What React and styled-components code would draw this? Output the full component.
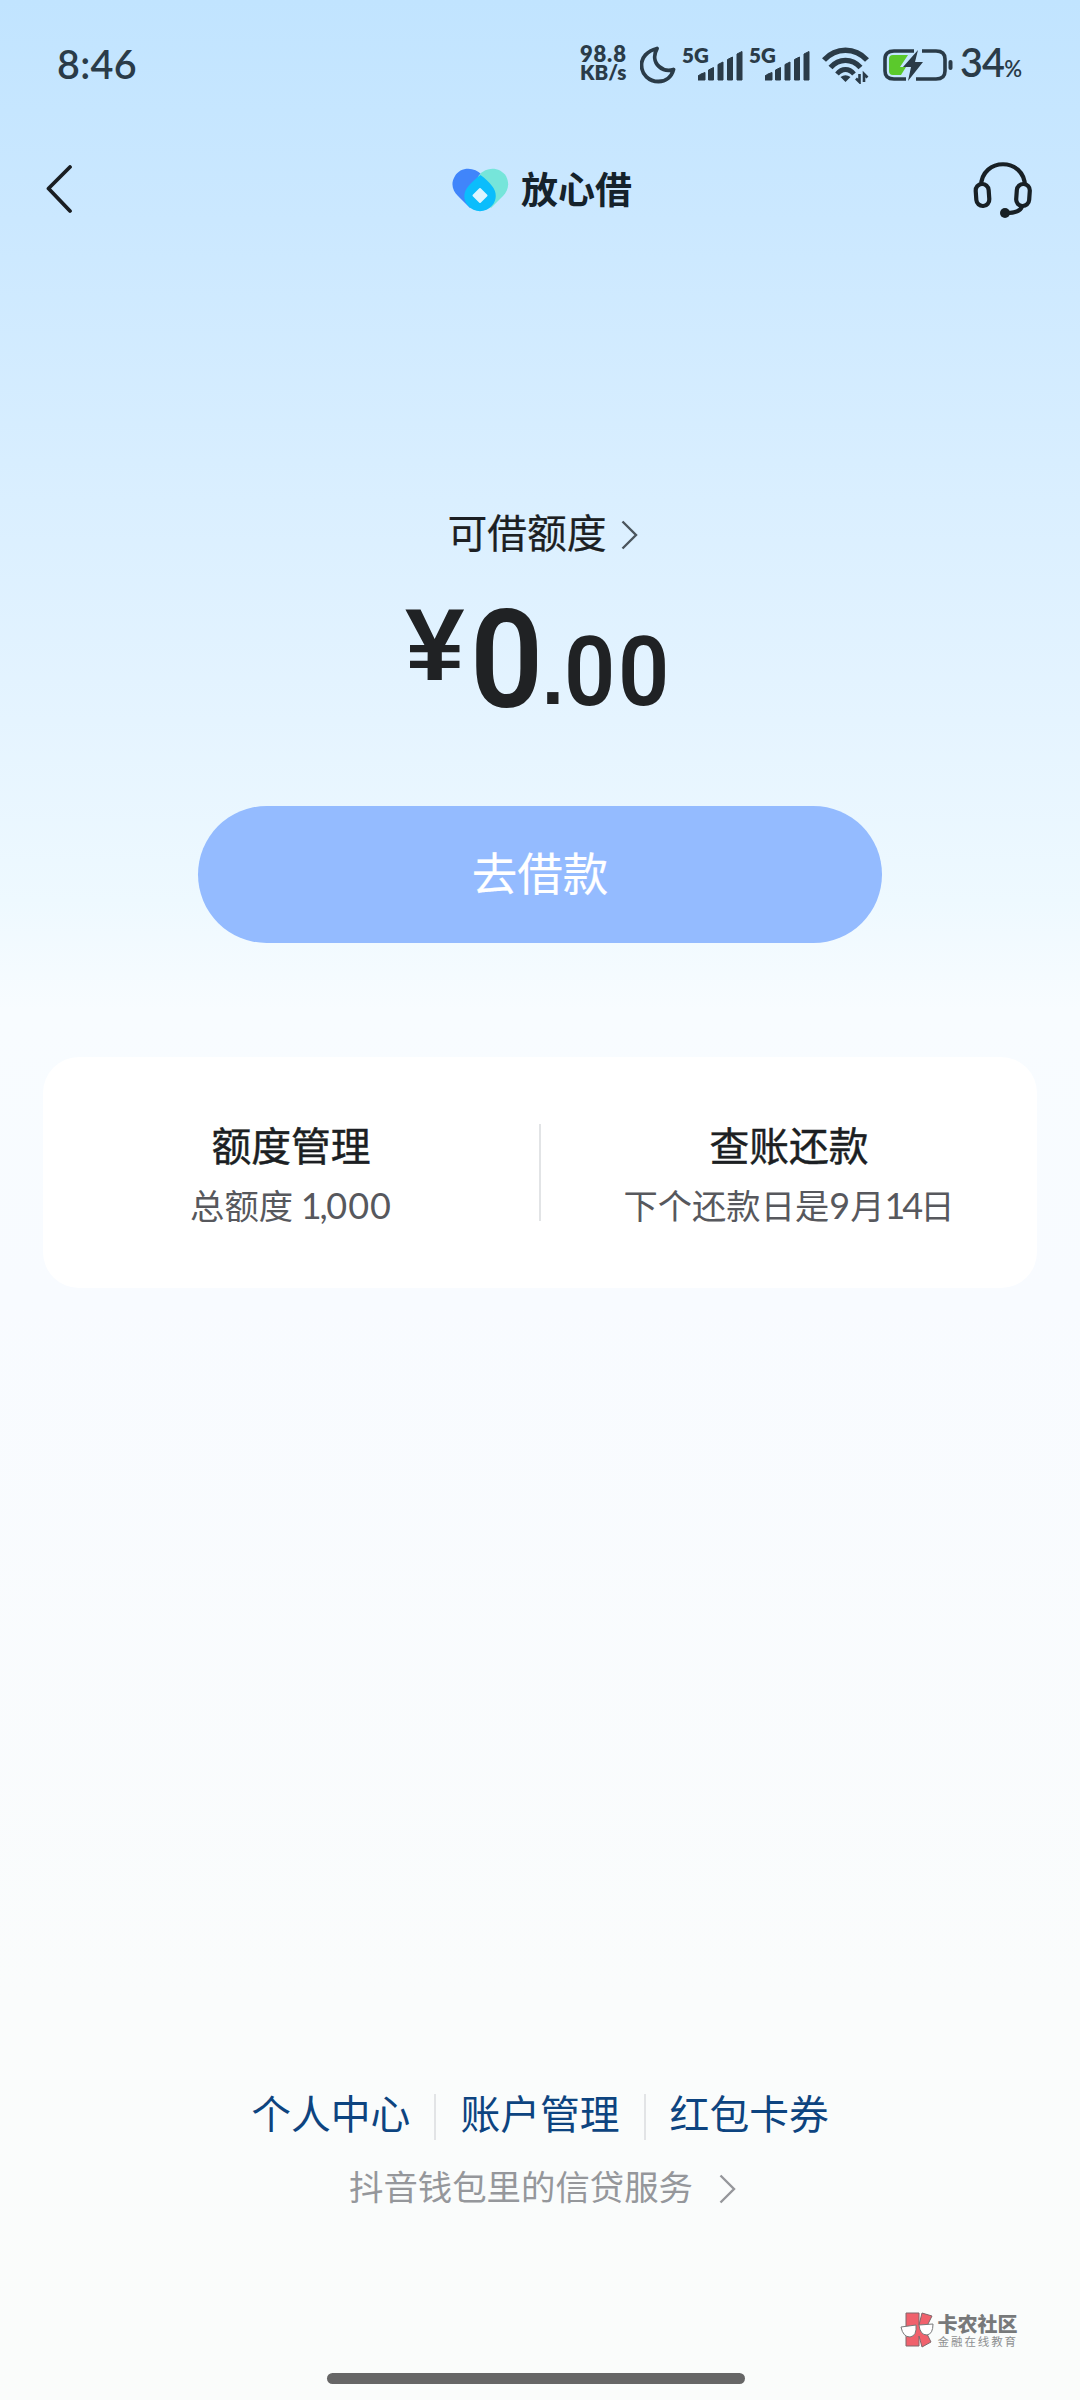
import React from "react";
import styled, { createGlobalStyle } from "styled-components";

const GlobalStyle = createGlobalStyle`
  * {
    box-sizing: border-box;
  }

  body {
    margin: 0;
    font-family: "Noto Sans CJK SC", sans-serif;
    color: #1c1f23;
  }
`;

const Page = styled.div`
  width: 1080px;
  height: 2400px;
  display: flex;
  flex-direction: column;
  overflow: hidden;
  background: linear-gradient(
    180deg,
    #c1e4ff 0px,
    #cbe8ff 220px,
    #daefff 500px,
    #e5f4ff 720px,
    #eef9ff 900px,
    #f8fcff 1010px,
    #f8fbff 1300px,
    #fafcfc 2000px,
    #fafcfb 2400px
  );
`;

// Status bar
const StatusBar = styled.header`
  height: 130px;
  padding: 0 57px;
  display: flex;
  justify-content: space-between;
  align-items: center;
  font-family: Lato, sans-serif;
  color: #2a3b48;

  svg {
    display: block;
    flex: none;
  }
`;

const Time = styled.div`
  margin-top: -2px;
  font-size: 39.5px;
  line-height: 48px;
  font-weight: 600;
  letter-spacing: 0.3px;
`;

const StatusIcons = styled.div`
  display: flex;
  align-items: center;
`;

const NetSpeed = styled.div`
  width: 60px;
  display: flex;
  flex-direction: column;
  margin-top: -4px;
  font-size: 20.5px;
  line-height: 19px;
  font-weight: 800;
  white-space: nowrap;
`;

const NetValue = styled.span`
  font-size: 22px;
  letter-spacing: 0.8px;
`;

const SignalBox = styled.div`
  width: 67px;
  height: 36px;
  display: flex;
  align-items: flex-start;

  span {
    width: 16px;
    margin-top: -1px;
    font-size: 20.5px;
    line-height: 18px;
    font-weight: 800;
  }
`;

const WifiBox = styled.div`
  margin: 0 13px 0 6px;
`;

const BatteryText = styled.div`
  width: 63px;
  margin-left: 7px;
  font-size: 39.5px;
  line-height: 48px;
  font-weight: 600;
  letter-spacing: -0.8px;
  white-space: nowrap;

  small {
    font-size: 22px;
  }
`;

// Navigation bar
const NavBar = styled.nav`
  height: 120px;
  padding: 0 47px 0 45px;
  display: flex;
  justify-content: space-between;
  align-items: center;
`;

const Brand = styled.div`
  margin-left: 38px;
  display: flex;
  align-items: center;
  gap: 12px;
  font-size: 37px;
  line-height: 44px;
  font-weight: 700;
  color: #15222b;

  span {
    margin-top: -4px;
  }
`;

// Credit limit
const Limit = styled.section`
  display: flex;
  flex-direction: column;
  align-items: center;
  padding-top: 251px;
`;

const LimitLabel = styled.div`
  height: 60px;
  margin-left: 5px;
  display: flex;
  align-items: center;
  gap: 14px;
  font-size: 39.8px;
  line-height: 60px;
  -webkit-text-stroke: 0.2px currentColor;

  svg {
    margin-top: 7px;
  }
`;

const Amount = styled.div`
  height: 148px;
  margin-top: 46px;
  width: 270px;
  display: flex;
  align-items: flex-start;
  font-family: Roboto, sans-serif;
  font-weight: 600;
  color: #202224;
`;

const Currency = styled.span`
  width: 68px;
  font-family: "Liberation Sans", sans-serif;
  font-size: 102px;
  line-height: 76px;
  font-weight: 700;
  transform: scaleX(1.05);
  transform-origin: left;
`;

const Whole = styled.span`
  width: 72px;
  margin-left: 8px;
  font-size: 138px;
  line-height: 107px;
  transform: scaleX(0.93);
  transform-origin: left;
`;

const Point = styled.span`
  width: 34px;
  font-family: "Liberation Sans", sans-serif;
  font-size: 80px;
  line-height: 139px;
  font-weight: 700;
`;

const Fraction = styled.span`
  font-size: 95.5px;
  line-height: 130px;
  transform: scaleX(0.94);
  transform-origin: left;
  letter-spacing: 3px;
`;

const BorrowButton = styled.button`
  width: 684px;
  height: 137px;
  margin-top: 51px;
  padding: 0 0 7px;
  border: 0;
  border-radius: 69px;
  background: #94bbff;
  color: #fff;
  font-family: inherit;
  font-size: 45.5px;
  line-height: 60px;
  -webkit-text-stroke: 0.2px currentColor;
`;

// Two entries under the button
const Card = styled.section`
  width: 994px;
  height: 231px;
  margin: 114px auto 0;
  display: flex;
  align-items: center;
  border-radius: 36px;
  background: #fff;
`;

const CardItem = styled.div`
  flex: 1;
  text-align: center;
`;

const CardTitle = styled.div`
  font-size: 39.8px;
  line-height: 58px;
  -webkit-text-stroke: 0.45px currentColor;
`;

const CardText = styled.div`
  margin-top: 5px;
  font-size: 34.3px;
  line-height: 52px;
  color: #57585d;
`;

const Digits = styled.span`
  font-family: Lato, sans-serif;
  font-size: 36px;
  letter-spacing: ${(props) => props.$spacing || 0}px;
`;

const Divider = styled.div`
  width: 2px;
  height: ${(props) => props.$height}px;
  background: #e2e4e6;
`;

// Footer
const Footer = styled.footer`
  margin-top: auto;
  display: flex;
  flex-direction: column;
  align-items: center;
`;

const Links = styled.div`
  height: 46px;
  display: flex;
  align-items: center;
  gap: 24px;
  font-size: 39.8px;
  line-height: 46px;
  color: #0d4480;

  span {
    margin-top: -11px;
  }
`;

const Service = styled.div`
  height: 50px;
  margin: 20px 0 0 5px;
  display: flex;
  align-items: center;
  gap: 26px;
  font-size: 34.4px;
  line-height: 50px;
  color: #95979b;

  svg {
    margin-top: 7px;
  }
`;

const Watermark = styled.div`
  align-self: flex-end;
  height: 38px;
  margin: 101px 62px 0 0;
  display: flex;
  align-items: center;
  gap: 4px;
`;

const WatermarkName = styled.div`
  font-size: 20px;
  line-height: 20px;
  font-weight: 900;
  color: #77797a;
`;

const WatermarkSlogan = styled.div`
  margin-top: 1px;
  font-size: 11.5px;
  line-height: 12px;
  letter-spacing: 1.9px;
  color: #8e9091;
`;

const HomeIndicator = styled.div`
  width: 418px;
  height: 11px;
  margin: 24px 0 16px -8px;
  border-radius: 6px;
  background: #666;
`;

const Chevron = ({ color }) => (
  <svg width="17" height="30" viewBox="0 0 17 30" fill="none">
    <path d="M1.5 1.5L15 15L1.5 28.5" stroke={color} strokeWidth="2.4" />
  </svg>
);

const Signal = () => (
  <SignalBox>
    <span>5G</span>
    <svg width="45" height="34" viewBox="0 0 45 34" fill="#2a3b48">
      <path d="M0 33V29L3 27L7 25.5V33Z" stroke="#2a3b48" strokeLinejoin="round" />
      <path d="M10.5 23L15.5 20.5V33H10.5Z" stroke="#2a3b48" strokeLinejoin="round" />
      <path d="M20 17.5L25 15V33H20Z" stroke="#2a3b48" strokeLinejoin="round" />
      <path d="M29.5 12.5L34.5 10V33H29.5Z" stroke="#2a3b48" strokeLinejoin="round" />
      <path d="M39 7L44 4.5V33H39Z" stroke="#2a3b48" strokeLinejoin="round" />
    </svg>
  </SignalBox>
);

const Moon = () => (
  <svg width="42" height="38" viewBox="0 0 42 38" fill="none">
    <path
      d="M17 2.5C7 5 1.5 11.5 1.5 19C1.5 28.5 9 35.5 18.5 35.5C26 35.5 31.5 31 33.5 23.5C29 25 23.5 24.5 19 20.5C14 16 13.5 9 17 2.5Z"
      stroke="#2a3b48"
      strokeWidth="3.8"
      strokeLinejoin="round"
    />
  </svg>
);

const Wifi = () => (
  <WifiBox>
    <svg width="48" height="37" viewBox="0 0 48 37" fill="none" stroke="#2a3b48">
      <path d="M2 13C14 0 33 0 45 13" strokeWidth="5.4" />
      <path d="M8.5 20.5C17 11 30 11 38.5 20.5" strokeWidth="5.4" />
      <path d="M15 27C20 21 27 21 32 27" strokeWidth="4.8" />
      <path d="M18.5 30Q23.5 26.5 28.5 30L23.5 35Z" fill="#2a3b48" stroke="none" />
      <path d="M37.5 27V35L34 31.5M42 35V27L45.5 30.5" strokeWidth="2.6" />
    </svg>
  </WifiBox>
);

const Battery = () => (
  <svg width="70" height="34" viewBox="0 0 70 34" fill="none">
    <path d="M31 3H11Q2 3 2 11V23Q2 31 11 31H23" stroke="#2a3b48" strokeWidth="3.6" />
    <path d="M39 3H53Q62 3 62 11V23Q62 31 53 31H33" stroke="#2a3b48" strokeWidth="3.6" />
    <path d="M10 7H25L17 19H23L18 27H10Q6 27 6 23V11Q6 7 10 7Z" fill="#5bc92c" />
    <path d="M35 2L20 19H28L25 33L40 14H32Z" fill="#2a3b48" />
    <rect x="65.5" y="12" width="4" height="10" rx="2" fill="#2a3b48" />
  </svg>
);

const BackIcon = () => (
  <svg width="28" height="50" viewBox="0 0 28 50" fill="none">
    <path
      d="M25 2L3.5 23.5L25 46"
      stroke="#1a1e22"
      strokeWidth="3.8"
      strokeLinecap="round"
      strokeLinejoin="round"
    />
  </svg>
);

const HeartLogo = () => (
  <svg width="57" height="44" viewBox="0 0 57 44">
    <path d="M30 7C22 -2 8 -1 3 8C-2 16 1 23 6 28L18 40L38 22Z" fill="#4085fb" />
    <path d="M27 7C35 -2 48 -1 54 8C58 16 56 23 51 28L39 40L20 22Z" fill="#76e5da" />
    <path
      d="M28.5 7C33 10 37 14 40 18C45 24 45 32 40 37.5C34 45 22 45 16 37.5C11 32 11 24 16.5 18C20 14 24 10 28.5 7Z"
      fill="#0bbdfc"
    />
    <path
      d="M28 21L34.5 27.5L28 34L21.5 27.5Z"
      fill="#dcf5ff"
      stroke="#dcf5ff"
      strokeWidth="2"
      strokeLinejoin="round"
    />
  </svg>
);

const HeadsetIcon = () => (
  <svg width="60" height="58" viewBox="0 0 60 58" fill="none" stroke="#182025" strokeWidth="4.2">
    <path d="M8 25C9 -4 51 -4 52 25" />
    <rect x="3" y="23" width="13" height="22" rx="6.5" transform="rotate(-4 9.5 34)" />
    <rect x="43.5" y="23" width="13" height="22" rx="6.5" transform="rotate(4 50 34)" />
    <path d="M49 45C48 50 42 52 33 52" />
    <circle cx="32" cy="52" r="5" fill="#182025" stroke="none" />
  </svg>
);

const WatermarkLogo = () => (
  <svg width="34" height="36" viewBox="0 0 34 36">
    <path
      d="M6 1H19V13L22 1L32 4L25 18L31 30L22 35L19 24V34H6Z"
      fill="#f0616c"
      stroke="#80686c"
    />
    <path d="M1 15L16 13Q17 24 10 25Q3 25 1 15Z" fill="#fff" stroke="#77797a" />
    <path d="M19 13L33 12Q33 22 27 23Q20 23 19 13Z" fill="#fff" stroke="#77797a" />
  </svg>
);

const links = ["个人中心", "账户管理", "红包卡券"];

const App = () => {
  return (
    <>
      <GlobalStyle />
      <Page>
        <StatusBar>
          <Time>8:46</Time>
          <StatusIcons>
            <NetSpeed>
              <NetValue>98.8</NetValue>
              <span>KB/s</span>
            </NetSpeed>
            <Moon />
            <Signal />
            <Signal />
            <Wifi />
            <Battery />
            <BatteryText>
              34<small>%</small>
            </BatteryText>
          </StatusIcons>
        </StatusBar>

        <NavBar>
          <BackIcon />
          <Brand>
            <HeartLogo />
            <span>放心借</span>
          </Brand>
          <HeadsetIcon />
        </NavBar>

        <Limit>
          <LimitLabel>
            可借额度
            <Chevron color="#4b555d" />
          </LimitLabel>
          <Amount>
            <Currency>¥</Currency>
            <Whole>0</Whole>
            <Point>.</Point>
            <Fraction>00</Fraction>
          </Amount>
          <BorrowButton>去借款</BorrowButton>
        </Limit>

        <Card>
          <CardItem>
            <CardTitle>额度管理</CardTitle>
            <CardText>
              总额度 <Digits $spacing={-2}>1</Digits>
              <Digits $spacing={-1.5}>,</Digits>
              <Digits $spacing={1}>000</Digits>
            </CardText>
          </CardItem>
          <Divider $height={97} />
          <CardItem>
            <CardTitle>查账还款</CardTitle>
            <CardText>
              下个还款日是<Digits>9</Digits>月<Digits $spacing={-3}>14</Digits>日
            </CardText>
          </CardItem>
        </Card>

        <Footer>
          <Links>
            {links.map((link, index) => (
              <React.Fragment key={link}>
                {index > 0 && <Divider $height={46} />}
                <span>{link}</span>
              </React.Fragment>
            ))}
          </Links>
          <Service>
            抖音钱包里的信贷服务
            <Chevron color="#95979b" />
          </Service>
          <Watermark>
            <WatermarkLogo />
            <div>
              <WatermarkName>卡农社区</WatermarkName>
              <WatermarkSlogan>金融在线教育</WatermarkSlogan>
            </div>
          </Watermark>
          <HomeIndicator />
        </Footer>
      </Page>
    </>
  );
};

export default App;
